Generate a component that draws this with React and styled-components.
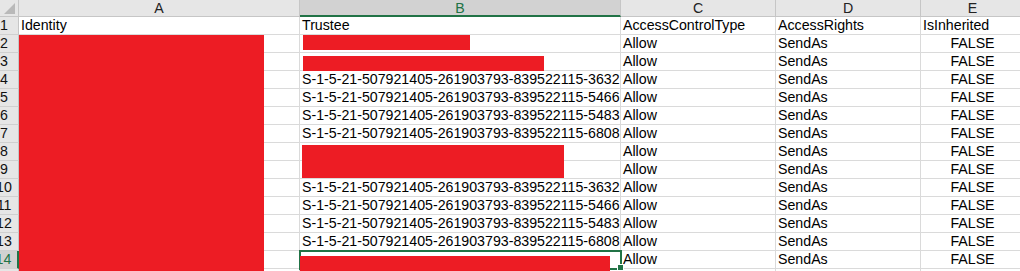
import styled, { createGlobalStyle, css } from "styled-components";

const GlobalStyle = createGlobalStyle`
  html, body {
    margin: 0;
    padding: 0;
    background: #ffffff;
    overflow: hidden;
  }
  body {
    font-family: "Liberation Sans", Arial, sans-serif;
  }
`;

const GREEN = "#217346";

const Page = styled.div`
  position: relative;
  width: 1020px;
  height: 271px;
  overflow: hidden;
`;

const Sheet = styled.div`
  display: grid;
  grid-template-columns: 29px 281px 321px 155px 145px 104px;
  grid-auto-rows: 18px;
  grid-template-rows: 17px;
  margin-left: -10px;
  font-size: 14.2px;
  color: #000;
`;

const Corner = styled.div`
  position: relative;
  background: #e6e6e6;
  border-right: 1px solid #c6c6c6;
  border-bottom: 1px solid #c6c6c6;
  box-sizing: border-box;

  &::after {
    content: "";
    position: absolute;
    right: 3px;
    bottom: 2px;
    width: 11px;
    height: 11px;
    background: #b9b9b9;
    clip-path: polygon(100% 0, 100% 100%, 0 100%);
  }
`;

const ColHead = styled.div`
  box-sizing: border-box;
  background: ${(p) => (p.$active ? "#d2d2d2" : "#e6e6e6")};
  color: ${(p) => (p.$active ? GREEN : "#222")};
  border-right: 1px solid #c6c6c6;
  border-bottom: ${(p) => (p.$active ? `2px solid ${GREEN}` : "1px solid #c6c6c6")};
  text-align: center;
  line-height: 16px;
`;

const RowHead = styled.div`
  box-sizing: border-box;
  background: ${(p) => (p.$active ? "#d2d2d2" : "#e6e6e6")};
  color: ${(p) => (p.$active ? GREEN : "#111")};
  border-right: ${(p) => (p.$active ? `2px solid ${GREEN}` : "1px solid #c6c6c6")};
  border-bottom: 1px solid #d0d0d0;
  text-align: center;
  line-height: 17px;
`;

const Cell = styled.div`
  position: relative;
  box-sizing: border-box;
  border-right: 1px solid #dadada;
  border-bottom: 1px solid #dadada;
  padding: 0 2px;
  line-height: 17px;
  white-space: nowrap;
  overflow: hidden;
  text-align: ${(p) => p.$align || "left"};
  ${(p) =>
    p.$selected &&
    css`
      overflow: visible;
      outline: 2px solid ${GREEN};
      outline-offset: -1px;
      z-index: 1;
      &::after {
        content: "";
        position: absolute;
        right: -4px;
        bottom: -3px;
        width: 5px;
        height: 5px;
        background: ${GREEN};
        border: 1px solid #fff;
      }
    `}
`;

const Redaction = styled.div`
  position: absolute;
  background: #ed1c24;
  z-index: 2;
`;

const SID = "S-1-5-21-507921405-261903793-839522115-";

const rows = [
  ["Identity", "Trustee", "AccessControlType", "AccessRights", "IsInherited"],
  ["", "", "Allow", "SendAs", "FALSE"],
  ["", "", "Allow", "SendAs", "FALSE"],
  ["", SID + "3632", "Allow", "SendAs", "FALSE"],
  ["", SID + "5466", "Allow", "SendAs", "FALSE"],
  ["", SID + "5483", "Allow", "SendAs", "FALSE"],
  ["", SID + "6808", "Allow", "SendAs", "FALSE"],
  ["", "", "Allow", "SendAs", "FALSE"],
  ["", "", "Allow", "SendAs", "FALSE"],
  ["", SID + "3632", "Allow", "SendAs", "FALSE"],
  ["", SID + "5466", "Allow", "SendAs", "FALSE"],
  ["", SID + "5483", "Allow", "SendAs", "FALSE"],
  ["", SID + "6808", "Allow", "SendAs", "FALSE"],
  ["", "", "Allow", "SendAs", "FALSE"],
  ["", "", "", "", ""],
];

const redactions = [
  { left: 19, top: 35, width: 245, height: 240 },
  { left: 303, top: 35, width: 167, height: 15 },
  { left: 303, top: 56, width: 241, height: 15 },
  { left: 302, top: 145, width: 262, height: 33 },
  { left: 300, top: 256, width: 310, height: 20 },
];

const letters = ["A", "B", "C", "D", "E"];

export default function App() {
  return (
    <Page>
      <GlobalStyle />
      <Sheet>
        <Corner />
        {letters.map((l) => (
          <ColHead key={l} $active={l === "B"}>
            {l}
          </ColHead>
        ))}
        {rows.map((row, i) => {
          const n = i + 1;
          return [
            <RowHead key={`h${n}`} $active={n === 14}>
              {n}
            </RowHead>,
            ...row.map((v, j) => (
              <Cell
                key={`${n}-${j}`}
                $align={j === 4 && n > 1 ? "center" : "left"}
                $selected={n === 14 && j === 1}
              >
                {v}
              </Cell>
            )),
          ];
        })}
      </Sheet>
      {redactions.map((r, i) => (
        <Redaction key={i} style={r} />
      ))}
    </Page>
  );
}
